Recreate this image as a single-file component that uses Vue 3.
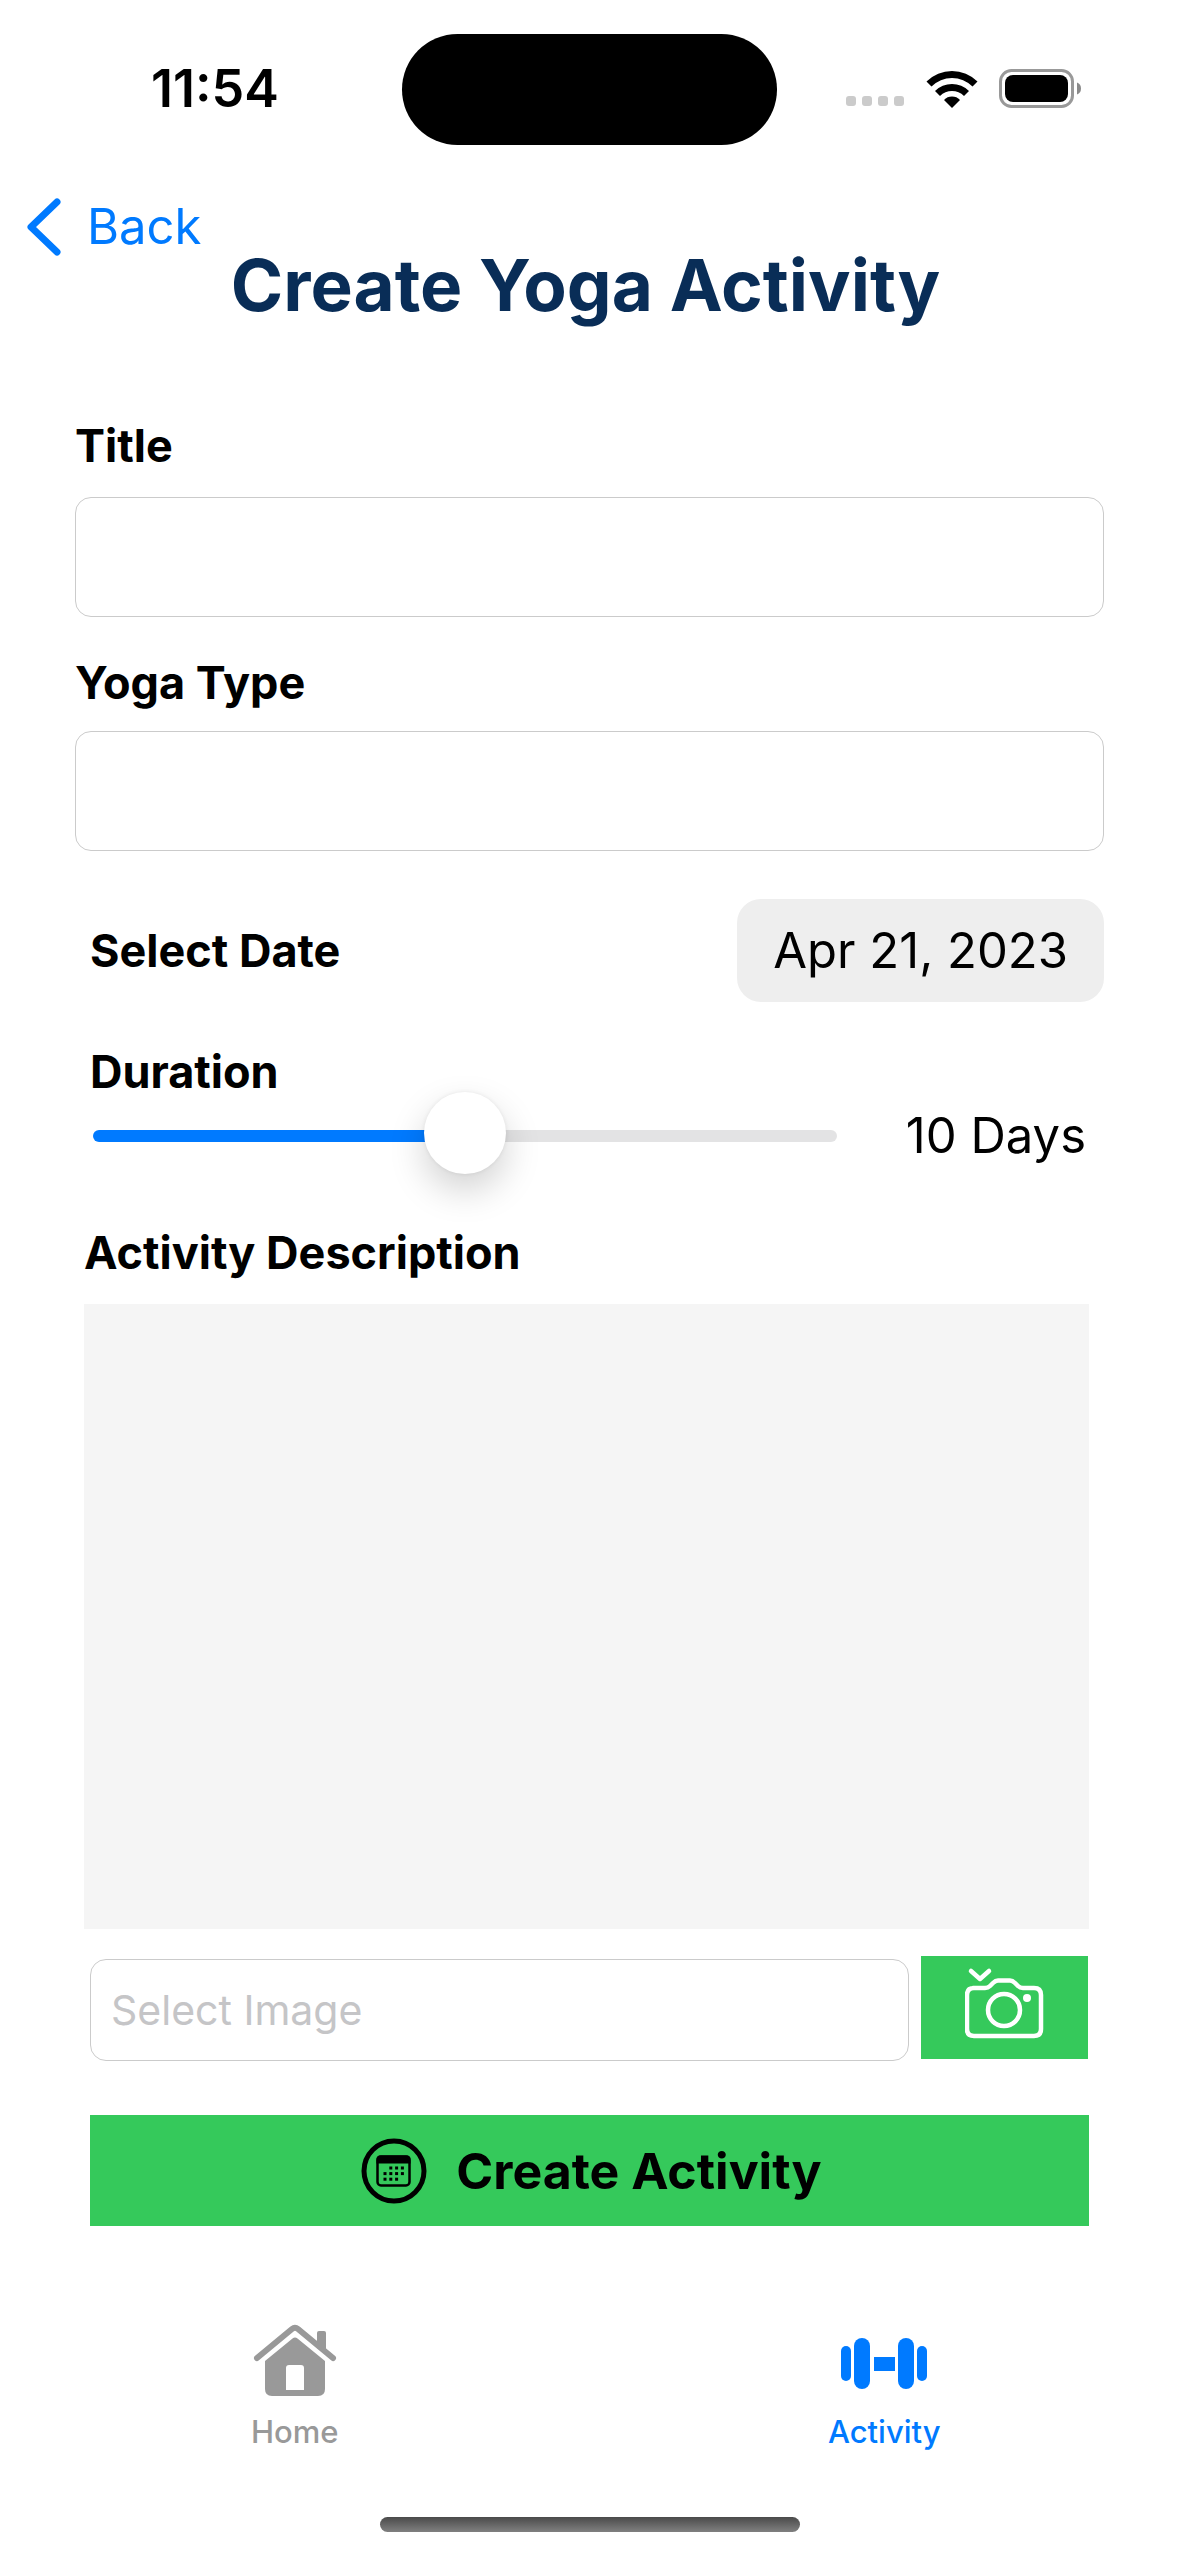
<script setup>
import { ref, computed } from 'vue'

const title = ref('')
const yogaType = ref('')
const date = ref('Apr 21, 2023')
const duration = ref(10)
const maxDays = 20
const description = ref('')
const image = ref('')
const fill = computed(() => `${(duration.value / maxDays) * 100}%`)
const calendarDots = [
  [1, 0], [2, 0], [3, 0],
  [0, 1], [1, 1], [2, 1], [3, 1],
  [0, 2], [1, 2], [2, 2],
]
</script>

<template>
  <div class="screen">
    <div class="status">
      <span class="time">11:54</span>
      <div class="island"></div>
      <div class="indicators">
        <svg class="cell" viewBox="0 0 58 12" aria-hidden="true">
          <rect v-for="n in 4" :key="n" :x="(n - 1) * 16" y="1" width="10" height="10" rx="3" fill="#cbcbcb" />
        </svg>
        <svg class="wifi" viewBox="0 0 52 38" aria-hidden="true">
          <path d="M0.500 11.500 A36 36 0 0 1 51.500 11.500 L46.500 16.500 A29 29 0 0 0 5.500 16.500 Z" />
          <path d="M9 21 A24 24 0 0 1 43 21 L38 26 A17 17 0 0 0 14 26 Z" />
          <path d="M18 30 A11 11 0 0 1 34 30 L26 38 Z" />
        </svg>
        <svg class="battery" viewBox="0 0 84 40" aria-hidden="true">
          <rect x="1.500" y="1.500" width="72" height="36" rx="11" fill="none" stroke="#999" stroke-width="3" />
          <rect x="6" y="6" width="63" height="27" rx="8" />
          <path d="M78 13.500 Q82 15 82 19.500 Q82 24 78 25.500 Z" fill="#8a8a8a" />
        </svg>
      </div>
    </div>

    <header class="header">
      <a class="back" href="#">
        <svg viewBox="0 0 34 58" aria-hidden="true">
          <path d="M30 4 L4 29 L30 54" />
        </svg>
        <span>Back</span>
      </a>
      <h1>Create Yoga Activity</h1>
    </header>

    <form class="form" @submit.prevent>
      <label class="caption" for="title">Title</label>
      <input id="title" v-model="title" class="box first" type="text" />

      <label class="caption second-caption" for="type">Yoga Type</label>
      <input id="type" v-model="yogaType" class="box" type="text" />

      <div class="date-row">
        <label class="caption" for="date">Select Date</label>
        <button id="date" class="date" type="button">{{ date }}</button>
      </div>

      <div class="duration">
        <label class="caption" for="duration">Duration</label>
        <div class="slider-row">
          <input
            id="duration"
            v-model.number="duration"
            class="slider"
            type="range"
            min="0"
            :max="maxDays"
            :style="{ '--fill': fill }"
          />
          <output for="duration">{{ duration }} Days</output>
        </div>
      </div>

      <div class="description">
        <label class="caption" for="description">Activity Description</label>
        <textarea id="description" v-model="description"></textarea>
      </div>

      <div class="image-row">
        <input v-model="image" class="box image" type="text" placeholder="Select Image" aria-label="Select Image" />
        <button class="camera" type="button" aria-label="Choose image">
          <svg viewBox="0 0 80 72" aria-hidden="true">
            <path d="M6 4 L15 12 L24 4" />
            <path d="M8 21 H20 Q23 21 25 19 L28 16 Q30.500 13.500 33 13.500 H45 Q47.500 13.500 50 16 L53 19 Q55 21 58 21 H69 Q76 21 76 28 V62 Q76 69 69 69 H9 Q2 69 2 62 V28 Q2 21 9 21" />
            <circle cx="39" cy="43" r="16" />
            <circle class="dot" cx="62" cy="31" r="4" />
          </svg>
        </button>
      </div>

      <button class="create" type="submit">
        <svg viewBox="0 0 66 66" aria-hidden="true">
          <circle cx="33" cy="33" r="30" fill="none" stroke="#000" stroke-width="5" />
          <rect x="16.500" y="18.500" width="32" height="29" rx="3.500" fill="none" stroke="#000" stroke-width="2.500" />
          <path d="M15.500 25.500 V21 Q15.500 17.500 19 17.500 H46 Q49.500 17.500 49.500 21 V25.500 Z" />
          <rect
            v-for="([col, row], i) in calendarDots"
            :key="i"
            :x="22.500 + col * 5.800"
            :y="28.500 + row * 5.600"
            width="3"
            height="3"
          />
        </svg>
        <span>Create Activity</span>
      </button>
    </form>

    <nav class="tabs">
      <a class="tab" href="#">
        <svg viewBox="0 0 84 80" aria-hidden="true">
          <path class="roof" d="M4 38 L39 9 Q42 6.500 45 9 L80 38" />
          <path d="M64 28 V13 Q64 11 66 11 H71 Q73 11 73 13 V34 Z" />
          <path
            fill-rule="evenodd"
            d="M12 41 L39.500 18.500 Q42 16.500 44.500 18.500 L72 41 V69 Q72 76 65 76 H19 Q12 76 12 69 Z M33 70 H51 V48 Q51 45 48 45 H36 Q33 45 33 48 Z"
          />
        </svg>
        <span>Home</span>
      </a>
      <a class="tab active" href="#">
        <svg viewBox="0 0 88 80" aria-hidden="true">
          <rect x="1" y="26" width="10" height="35" rx="5" />
          <rect x="14" y="18" width="16" height="51" rx="8" />
          <rect x="34" y="37" width="21" height="14" />
          <rect x="58" y="18" width="16" height="51" rx="8" />
          <rect x="77" y="26" width="10" height="35" rx="5" />
        </svg>
        <span>Activity</span>
      </a>
    </nav>
    <div class="home-bar"></div>
  </div>
</template>

<style>
body {
  background: #fff;
}
</style>

<style scoped>
.screen {
  display: flex;
  flex-direction: column;
  min-height: 100vh;
  box-sizing: border-box;
  font-family: Inter, "Liberation Sans", sans-serif;
  color: #000;
}

button,
input,
textarea {
  box-sizing: border-box;
  margin: 0;
  padding: 0;
  border: 0;
  outline: 0;
  font-family: inherit;
  color: inherit;
}

a {
  text-decoration: none;
}

svg {
  display: block;
  flex: none;
}

.status {
  display: grid;
  grid-template-columns: 1fr 375px 1fr;
  align-items: center;
  height: 178px;
}

.time {
  padding-left: 28px;
  text-align: center;
  font-size: 52px;
  line-height: 60px;
  font-weight: 600;
}

.island {
  height: 111px;
  border-radius: 56px;
  background: #000;
}

.indicators {
  display: flex;
  align-items: center;
  justify-content: flex-end;
  padding-right: 96px;
}

.cell {
  width: 58px;
  height: 12px;
  margin: 24px 22px 0 0;
}

.wifi {
  width: 52px;
  height: 38px;
  margin-right: 21px;
}

.battery {
  width: 84px;
  height: 40px;
}

.back {
  display: inline-flex;
  align-items: center;
  gap: 26px;
  height: 56px;
  margin: 21px 0 0 27px;
  color: #007aff;
  font-size: 49px;
  line-height: 56px;
  vertical-align: top;
}

.back svg {
  width: 34px;
  height: 58px;
}

.back path {
  fill: none;
  stroke: currentColor;
  stroke-width: 7;
  stroke-linecap: round;
  stroke-linejoin: round;
}

h1 {
  margin: 0;
  padding-right: 8px;
  text-align: center;
  color: #092d57;
  font-size: 71px;
  line-height: 60px;
  font-weight: 700;
}

.form {
  display: flex;
  flex-direction: column;
  padding: 104px 75px 0;
}

.caption {
  font-size: 45px;
  line-height: 54px;
  font-weight: 700;
}

.box {
  height: 120px;
  margin-top: 21px;
  padding: 0 20px;
  border: 1px solid #cbcbcb;
  border-radius: 16px;
  background: #fff;
  font-size: 41px;
}

.box.first {
  margin-top: 24px;
}

.second-caption {
  margin-top: 39px;
}

.date-row {
  display: flex;
  align-items: center;
  justify-content: space-between;
  margin-top: 48px;
  padding-left: 15px;
}

.date {
  height: 103px;
  padding: 0 36px;
  border-radius: 24px;
  background: #eee;
  font-size: 49px;
}

.duration {
  display: flex;
  flex-direction: column;
  margin-top: 43px;
  padding: 0 18px 0 15px;
}

.slider-row {
  display: flex;
  align-items: center;
  justify-content: space-between;
  height: 74px;
  padding-left: 3px;
}

.slider {
  flex: 1;
  min-width: 0;
  height: 74px;
  margin-right: 69px;
  appearance: none;
  background: transparent;
}

.slider::-webkit-slider-runnable-track {
  height: 12px;
  border-radius: 6px;
  background: linear-gradient(to right, #007aff var(--fill), #e3e3e4 var(--fill));
}

.slider::-webkit-slider-thumb {
  appearance: none;
  width: 82px;
  height: 82px;
  margin-top: -38px;
  border-radius: 50%;
  background: #fff;
  box-shadow: 0 0 4px rgba(0, 0, 0, 0.08), 0 16px 36px rgba(0, 0, 0, 0.18);
}

output {
  font-size: 49px;
  line-height: 60px;
}

.description {
  display: flex;
  flex-direction: column;
  margin: 53px 15px 0 9px;
}

textarea {
  height: 625px;
  margin-top: 24px;
  padding: 24px;
  resize: none;
  background: #f5f5f5;
  font-size: 41px;
}

.image-row {
  display: flex;
  align-items: flex-start;
  gap: 12px;
  margin: 27px 16px 0 15px;
}

.image {
  flex: 1;
  min-width: 0;
  height: 102px;
  margin-top: 3px;
}

.image::placeholder {
  color: #c5c5c7;
  opacity: 1;
}

.camera {
  display: flex;
  justify-content: center;
  width: 167px;
  height: 103px;
  padding-top: 11px;
  background: #35c95b;
}

.camera svg {
  width: 80px;
  height: 72px;
}

.camera path,
.camera circle {
  fill: none;
  stroke: #fff;
  stroke-width: 4.5;
  stroke-linecap: round;
  stroke-linejoin: round;
}

.camera .dot {
  fill: #fff;
  stroke: none;
}

.create {
  display: flex;
  align-items: center;
  justify-content: center;
  gap: 29px;
  height: 111px;
  margin: 54px 15px 0;
  padding-left: 4px;
  background: #35c95b;
  font-size: 50px;
  font-weight: 700;
}

.create svg {
  width: 66px;
  height: 66px;
}

.tabs {
  display: grid;
  grid-template-columns: 1fr 1fr;
  margin-top: auto;
}

.tab {
  display: flex;
  flex-direction: column;
  align-items: center;
  gap: 14px;
  color: #999;
  font-size: 31px;
  line-height: 36px;
  font-weight: 500;
}

.tab.active {
  color: #007aff;
}

.tab svg {
  height: 80px;
  fill: currentColor;
}

.roof {
  fill: none;
  stroke: currentColor;
  stroke-width: 6;
  stroke-linecap: round;
}

.home-bar {
  align-self: center;
  width: 420px;
  height: 15px;
  margin: 67px 0 24px;
  border-radius: 8px;
  background: linear-gradient(#4a4a4a, #808080);
}
</style>
